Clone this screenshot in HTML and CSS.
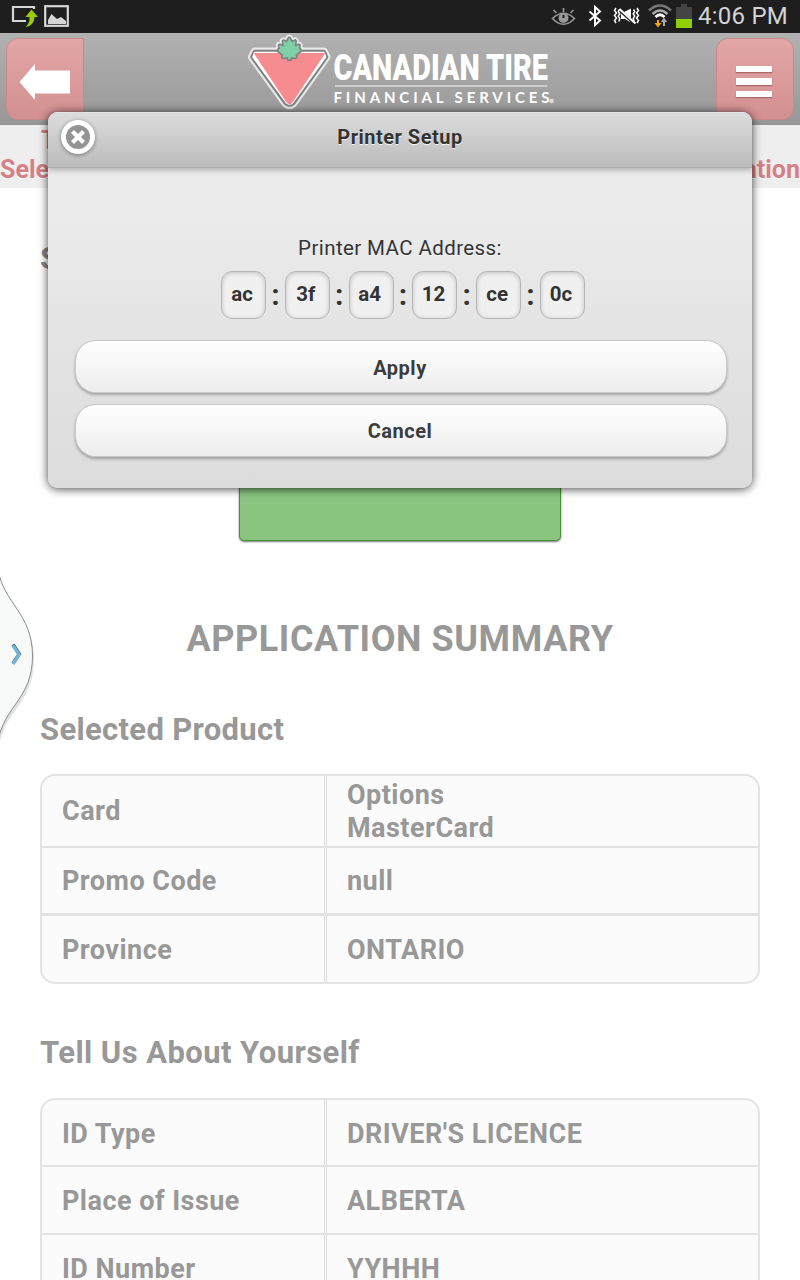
FILE: index.html
```html
<!DOCTYPE html>
<html lang="en">
<head>
<meta charset="utf-8">
<title>Printer Setup</title>
<link rel="stylesheet" href="styles.css">
</head>
<body>
<div class="status">
  <svg class="status-left" width="80" height="33" viewBox="0 0 80 33">
    <path d="M34 9V7H13V21H26" fill="none" stroke="#d6d6d6" stroke-width="2.2"/>
    <path d="M31.500 9.500L38 17H34.500Q34 26 25.500 27Q30 23 29.500 17H25.500Z" fill="#99cc00"/>
    <rect x="45.200" y="6.200" width="22.600" height="19.600" fill="none" stroke="#d6d6d6" stroke-width="2.200"/>
    <path d="M48 24V20L51.500 14L57 19L61 17L66 21V24Z" fill="#d6d6d6"/>
  </svg>
  <svg class="status-right" width="150" height="33" viewBox="550 0 150 33">
    <g fill="none" stroke="#999" stroke-width="1.600">
      <path d="M552.500 18.500Q563.500 8 574.500 18.500Q563.500 30 552.500 18.500Z"/>
      <path d="M563.500 8v4M553.500 10l3 3M573.500 10l-3 3"/>
    </g>
    <circle cx="563.500" cy="18" r="5" fill="#999"/><path d="M563.500 18V15" stroke="#1e1e1e" stroke-width="2"/>
    <path d="M589.500 11.500L600 20.500L595 25V7L600 11.500L589.500 20.500" fill="none" stroke="#fff" stroke-width="2"/>
    <g fill="none" stroke="#fff" stroke-width="1.500">
      <path d="M616 8l-1.500 2.500l2 2.500l-2 2.500l2 2.500l-2 2.500l1.500 2.500M619.500 9.500l-1.200 2l1.500 2.500l-1.500 2l1.500 2.500l-1 3M637 8l1.500 2.500l-2 2.500l2 2.500l-2 2.500l2 2.500l-1.500 2.500M633.500 9.500l1.200 2l-1.500 2.500l1.500 2l-1.500 2.500l1 3"/>
      <path d="M619.500 9L635.500 23.500" stroke-width="2"/>
    </g>
    <path d="M621 13.500L630 21.500V22L625 19H621ZM624 12L631 8.500V18Z" fill="#fff"/>
    <g fill="none" stroke-width="2.600">
      <path d="M649 10.500Q660 0.500 671 10.500" stroke="#777"/>
      <path d="M652.500 14Q660 7 667.500 14" stroke="#aaa"/>
      <path d="M655.500 17Q660 12.500 664.500 17" stroke="#fff"/>
    </g>
    <path d="M657 20h2v3h2.500L658 27.500L654.500 23H657Z" fill="#f9a11e"/>
    <path d="M663 26h2v-4h2.200L664 17.500L660.800 22H663Z" fill="#aaa"/>
    <path d="M676 7h5V4h6v3h5v12h-16Z" fill="#444"/><path d="M676 19h16v9h-16Z" fill="#8fd000"/>
  </svg>
  <span class="clock">4:06 PM</span>
</div>

<header class="header">
  <div class="nav-btn back">
    <svg width="52" height="38" viewBox="0 0 52 38"><path d="M.5 19L16 1V7.500H51V30.500H16V37Z" fill="#fff"/></svg>
  </div>
  <svg class="logo" width="310" height="80" viewBox="245 33 310 80">
    <defs>
      <path id="leaf" d="M289.300 38.500L291.700 43L295 41.200L294.200 47L299 45.500L298.300 48.500L300.200 50.500L295.200 54.800L295.700 57.300L290.300 56.700V59H288.300V56.700L282.900 57.300L283.400 54.800L278.400 50.500L280.300 48.500L279.600 45.500L284.400 47L283.600 41.200L286.900 43Z"/>
    </defs>
    <g stroke-linejoin="round">
      <path d="M255 52H323.500L326 57L293 103Q289.500 106.500 286 103L252.500 57Z" fill="#e8e8e8" stroke="#e8e8e8" stroke-width="9"/>
      <use href="#leaf" fill="#ececec" stroke="#ececec" stroke-width="7.500"/>
      <path d="M255 52.500H323.500L325.500 57L293 102.500Q289.500 105.500 286 102.500L253 57Z" fill="#fff" stroke="#808080" stroke-width="5.500"/>
      <path d="M255 53H323.500L325 57L292.500 102Q289.500 105 286.500 102L253.500 57Z" fill="#fff" stroke="#fff" stroke-width="2.500"/>
      <path d="M254.500 53.500H324.500L292 102.500Q289.500 105 287 102.500Z" fill="#f78c90" stroke="#f78c90"/>
      <use href="#leaf" fill="#818181" stroke="#818181" stroke-width="4"/>
      <use href="#leaf" fill="#7fd0a6" stroke="#7fd0a6" stroke-width=".6"/>
    </g>
    <text class="brand" x="333.500" y="79.500" textLength="214.500" lengthAdjust="spacingAndGlyphs">CANADIAN TIRE</text>
    <path d="M335 86H547.500" stroke="#ddd" stroke-width="1.400"/>
    <text class="brand-sub" x="333.500" y="103" textLength="216" lengthAdjust="spacing">FINANCIAL SERVICES</text>
    <circle cx="551.500" cy="101" r="2.300" fill="#ddd"/>
  </svg>
  <div class="nav-btn menu"><i class="bar"></i><i class="bar"></i><i class="bar"></i></div>
</header>

<div class="banner">
  <div class="banner-top">T</div>
  <div class="banner-row"><span>Sele</span><span>ation</span></div>
</div>

<main class="content">
  <h2 class="hidden-title">S</h2>
  <div class="green-btn"></div>
  <h1 class="summary-title">APPLICATION SUMMARY</h1>
  <h2 class="section-title">Selected Product</h2>
  <div class="table">
    <div class="row tall"><div class="key">Card</div><div class="val"><span>Options<br>MasterCard</span></div></div>
    <div class="row second"><div class="key">Promo Code</div><div class="val">null</div></div>
    <div class="row last"><div class="key">Province</div><div class="val">ONTARIO</div></div>
  </div>
  <h2 class="section-title about">Tell Us About Yourself</h2>
  <div class="table">
    <div class="row short"><div class="key">ID Type</div><div class="val">DRIVER'S LICENCE</div></div>
    <div class="row"><div class="key">Place of Issue</div><div class="val">ALBERTA</div></div>
    <div class="row"><div class="key">ID Number</div><div class="val">YYHHH</div></div>
  </div>
</main>

<svg class="drawer" width="40" height="190" viewBox="0 560 40 190">
  <path d="M-2 571C3 605 33 613 33 656.500C33 700 3 708 -2 744Z" fill="#888" opacity=".25" transform="translate(1 3)"/>
  <path d="M-2 569C3 603 32.500 613 32.500 656C32.500 699 3 707 -2 742Z" fill="#f8faf9" stroke="#8c8c8c"/>
  <path d="M13 644.500L19.300 654L13 663.500" fill="none" stroke="#47616e" stroke-width="3.400"/>
  <path d="M13 645.500L19 654.500L13 664" fill="none" stroke="#74b4d8" stroke-width="3.200"/>
</svg>

<section class="dialog">
  <div class="dialog-head">
    <span class="close"><svg width="24" height="24" viewBox="0 0 24 24"><circle cx="12" cy="12" r="12" fill="#949494"/><path d="M6.500 6.500L17.500 17.500M17.500 6.500L6.500 17.500" stroke="#fff" stroke-width="4.200"/></svg></span>
    <span class="dialog-title">Printer Setup</span>
  </div>
  <div class="dialog-body">
    <div class="label">Printer MAC Address:</div>
    <div class="mac">
      <span class="octet">ac</span><b class="colon">:</b><span class="octet">3f</span><b class="colon">:</b><span class="octet">a4</span><b class="colon">:</b><span class="octet">12</span><b class="colon">:</b><span class="octet">ce</span><b class="colon">:</b><span class="octet">0c</span>
    </div>
    <div class="button apply">Apply</div>
    <div class="button">Cancel</div>
  </div>
</section>
</body>
</html>
```
FILE: styles.css
```css
* { box-sizing: border-box; }
body { margin: 0; position: relative; width: 800px; height: 1280px; overflow: hidden; background: #fff; font-family: Roboto, "Liberation Sans", sans-serif; }
h1, h2 { margin: 0; }
.status { height: 33px; background: #1e1e1e; display: flex; align-items: center; }
.status-right { margin-left: 470px; flex: none; }
.status-left { flex: none; }
.clock { color: #d4d4d4; font-size: 24px; line-height: 33px; margin-left: -2px; letter-spacing: .25px; white-space: nowrap; }
.header { height: 92px; background: linear-gradient(#b1b1b1, #989898); border-bottom: 1px solid #929292; display: flex; justify-content: space-between; align-items: flex-start; padding: 0 6px; }
.nav-btn { height: 82px; margin-top: 5px; width: 78px; background: linear-gradient(#e2a6a6, #d39090); border: 1px solid #c98989; border-radius: 12px; display: flex; align-items: center; justify-content: center; }
.back { border-radius: 12px 0 0 12px; padding-top: 6px; }
.menu { flex-direction: column; gap: 6px; padding: 5px 2px 0 0; }
.bar { width: 36px; height: 6.500px; background: #fff; box-shadow: 0 1px 1px #a66; }
.logo { margin-left: -1px; }
.brand { font-weight: 900; font-size: 37px; fill: #fff; }
.brand-sub { font-family: Lato, sans-serif; font-weight: 700; font-size: 15px; fill: #fff; }
.banner { height: 63px; background: #eee; color: #d57f86; font-weight: 700; font-size: 25px; line-height: 29px; padding-top: 1px; text-shadow: 0 1px 0 #fff; }
.banner-top { padding-left: 41px; }
.banner-row { display: flex; justify-content: space-between; }
.content { padding: 0 40px; color: #989898; }
.hidden-title { height: 70px; margin-top: 51px; font-size: 32px; line-height: 38px; color: #888; }
.green-btn { width: 322px; height: 232px; margin: 0 auto; background: #8ac580; border: 1px solid #3f942f; border-radius: 5px; box-shadow: 0 1px 2px #777; }
.summary-title { margin-top: 75px; height: 46px; font-size: 36px; line-height: 46px; letter-spacing: .58px; text-align: center; }
.section-title { margin-top: 47px; height: 42px; font-size: 31px; line-height: 42px; letter-spacing: .32px; }
.table { margin-top: 23px; border: 2px solid #e3e3e3; border-radius: 15px; background: #fbfbfb; overflow: hidden; font-size: 27px; line-height: 33px; letter-spacing: .47px; font-weight: 700; }
.about { margin-top: 48px; margin-bottom: 24px; letter-spacing: .43px; }
.row { display: grid; grid-template-columns: 285px 1fr; height: 68px; border-bottom: 2px solid #e2e2e2; }
.key, .val { display: flex; align-items: center; padding: 2px 0 0 20px; }
.key { border-right: 3px double #dcdcdc; }
.tall { height: 72px; }
.second { border-bottom-width: 3px; }
.last { height: 66px; border-bottom: 0; }
.short { height: 67px; }
.short .key, .short .val { padding-top: 3px; }
.tall .key { padding-top: 0; }
.drawer { position: absolute; left: 0; top: 560px; }
.dialog { position: absolute; left: 48px; top: 112px; width: 704px; height: 376px; border-radius: 10px; background: linear-gradient(#f0f0f0, #dcdcdc); box-shadow: 0 1px 10px rgba(0,0,0,.75); color: #333; text-shadow: 0 1px 0 #f6f6f6; overflow: hidden; }
.dialog-head { height: 56px; display: flex; align-items: center; background: linear-gradient(#dcdcdc, #bcbcbc); border-top: 1px solid #e3e3e3; border-bottom: 1px solid #aaa; box-shadow: 0 2px 6px rgba(0,0,0,.28); padding: 0 13px; }
.close { width: 34px; height: 34px; border-radius: 50%; background: #fff; display: flex; align-items: center; justify-content: center; box-shadow: 0 1px 4px rgba(0,0,0,.4); margin-top: -6px; }
.dialog-title { flex: 1; margin-right: 34px; text-align: center; font-weight: 700; font-size: 20px; letter-spacing: .5px; line-height: 24px; padding-bottom: 7px; }
.dialog-body { padding: 67px 26px 0 28px; }
.label { text-align: center; font-size: 20.500px; line-height: 26px; letter-spacing: .4px; margin-right: 2px; }
.mac { display: flex; align-items: center; padding-left: 145px; margin-top: 10px; height: 48px; }
.octet { width: 45px; height: 48px; border: 1px solid #b5b5b5; border-radius: 11px; background: #f0f0f0; box-shadow: inset 0 1px 4px rgba(0,0,0,.2); font-weight: 700; font-size: 20.500px; line-height: 45px; text-align: center; padding-right: 3px; flex: none; }
.colon { width: 18.800px; text-align: center; font-size: 30px; line-height: 48px; }
.button { height: 51px; margin-top: 13px; border-radius: 20px; background: linear-gradient(#fff, #ededed); box-shadow: 0 0 0 1px #c9c9c9, 0 2px 3px 1px rgba(0,0,0,.28); text-align: center; font-weight: 700; font-size: 20px; letter-spacing: .5px; line-height: 52px; padding-right: 2px; color: #3c3c3c; }
.apply { margin-top: 22px; margin-bottom: 13px; line-height: 54px; }
```
